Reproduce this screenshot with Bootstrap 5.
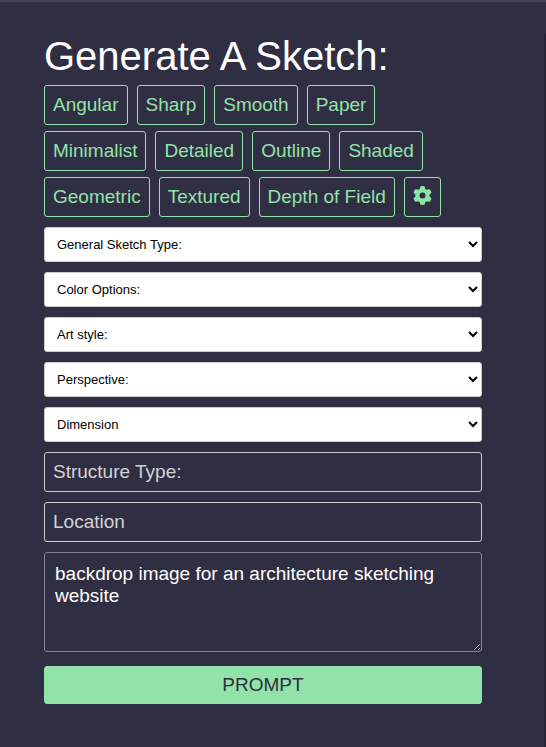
<!DOCTYPE html>
<html lang="en">
<head>
<meta charset="utf-8">
<meta name="viewport" content="width=device-width, initial-scale=1">
<title>Generate A Sketch</title>
<link href="https://cdn.jsdelivr.net/npm/bootstrap@5.3.0/dist/css/bootstrap.min.css" rel="stylesheet">
<style>
  body {
    background: #302e42;
    color: #fff;
    font-family: "Liberation Sans", Arial, sans-serif;
    font-size: 19px;
    border-top: 2px solid #444158;
  }
  .sketch-panel { padding: 30px 62px 43px 44px; }
  .edge-rail { width: 2px; margin-top: 32px; background: #262435; }
  .sketch-title { font-size: 40px; line-height: 48px; margin-bottom: 5px; font-weight: 400; }
  .chip-list { gap: 6px 9px; margin-bottom: 10px; }
  .chip {
    --bs-btn-color: #92e3a9;
    --bs-btn-border-color: #92e3a9;
    --bs-btn-hover-color: #302e42;
    --bs-btn-hover-bg: #92e3a9;
    --bs-btn-hover-border-color: #92e3a9;
    --bs-btn-padding-x: 8px;
    --bs-btn-padding-y: 4px;
    --bs-btn-font-size: 19px;
    --bs-btn-line-height: 30px;
    --bs-btn-border-radius: 3px;
    height: 40px;
  }
  .chip svg { width: 19px; height: 19px; display: block; margin-bottom: 3px; }
  .field-stack { gap: 10px; }
  .pick {
    height: 35px;
    padding: 0 8px;
    border: 1px solid #ccc;
    border-radius: 3px;
    background: #fff;
    color: #000;
    font-size: 13px;
  }
  .entry, .entry:focus {
    height: 40px;
    padding: 5px 8px;
    border: 1px solid #ccc;
    border-radius: 3px;
    background: transparent;
    color: #fff;
    font-size: 19px;
    line-height: 28px;
  }
  .entry::placeholder { color: #d3d3d3; opacity: 1; }
  .prompt-text, .prompt-text:focus {
    height: 100px;
    padding: 10px;
    border: 1px solid #858490;
    border-radius: 3px;
    background: transparent;
    color: #fff;
    font-size: 19px;
    line-height: 22px;
  }
  .prompt-send {
    --bs-btn-color: #302e42;
    --bs-btn-bg: #92e3a9;
    --bs-btn-border-color: #92e3a9;
    --bs-btn-hover-color: #302e42;
    --bs-btn-hover-bg: #7fd497;
    --bs-btn-padding-y: 4px;
    --bs-btn-font-size: 19px;
    --bs-btn-line-height: 28px;
    --bs-btn-border-radius: 3px;
    margin-top: 4px;
  }
</style>
</head>
<body>
<div class="d-flex">
  <main class="sketch-panel flex-grow-1">
    <h1 class="sketch-title">Generate A Sketch:</h1>
    <div class="chip-list d-flex flex-wrap">
      <button type="button" class="btn chip">Angular</button>
      <button type="button" class="btn chip">Sharp</button>
      <button type="button" class="btn chip">Smooth</button>
      <button type="button" class="btn chip">Paper</button>
      <button type="button" class="btn chip">Minimalist</button>
      <button type="button" class="btn chip">Detailed</button>
      <button type="button" class="btn chip">Outline</button>
      <button type="button" class="btn chip">Shaded</button>
      <button type="button" class="btn chip">Geometric</button>
      <button type="button" class="btn chip">Textured</button>
      <button type="button" class="btn chip">Depth of Field</button>
      <button type="button" class="btn chip" aria-label="Settings">
        <svg viewBox="0 0 512 512" fill="currentColor" aria-hidden="true"><path d="M495.9 166.6c3.2 8.7 .5 18.4-6.4 24.6l-43.3 39.4c1.1 8.3 1.7 16.8 1.7 25.4s-.6 17.1-1.7 25.4l43.3 39.4c6.9 6.2 9.6 15.9 6.4 24.6c-4.4 11.9-9.7 23.3-15.8 34.3l-4.7 8.1c-6.6 11-14 21.4-22.1 31.2c-5.9 7.2-15.7 9.6-24.5 6.8l-55.7-17.7c-13.4 10.3-28.2 18.9-44 25.4l-12.5 57.1c-2 9.1-9 16.3-18.2 17.8c-13.8 2.3-28 3.5-42.5 3.5s-28.7-1.2-42.5-3.5c-9.2-1.5-16.2-8.7-18.2-17.8l-12.5-57.1c-15.8-6.5-30.6-15.1-44-25.4L83.1 425.9c-8.8 2.8-18.6 .3-24.5-6.8c-8.1-9.8-15.5-20.2-22.1-31.2l-4.7-8.1c-6.1-11-11.4-22.4-15.8-34.3c-3.2-8.7-.5-18.4 6.4-24.6l43.3-39.4C64.6 273.1 64 264.6 64 256s.6-17.1 1.7-25.4L22.4 191.2c-6.9-6.2-9.6-15.9-6.4-24.6c4.4-11.9 9.7-23.3 15.8-34.3l4.7-8.1c6.6-11 14-21.4 22.1-31.2c5.9-7.2 15.7-9.6 24.5-6.8l55.7 17.7c13.4-10.3 28.2-18.9 44-25.4l12.5-57.1c2-9.1 9-16.3 18.2-17.8C227.3 1.2 241.5 0 256 0s28.7 1.2 42.5 3.5c9.2 1.5 16.2 8.7 18.2 17.8l12.5 57.1c15.8 6.5 30.6 15.1 44 25.4l55.7-17.7c8.8-2.8 18.6-.3 24.5 6.8c8.1 9.8 15.5 20.2 22.1 31.2l4.7 8.1c6.1 11 11.4 22.4 15.8 34.3zM256 336a80 80 0 1 0 0-160 80 80 0 1 0 0 160z"/></svg>
      </button>
    </div>
    <form class="field-stack d-flex flex-column">
      <select class="pick w-100" aria-label="General Sketch Type"><option>General Sketch Type:</option></select>
      <select class="pick w-100" aria-label="Color Options"><option>Color Options:</option></select>
      <select class="pick w-100" aria-label="Art style"><option>Art style:</option></select>
      <select class="pick w-100" aria-label="Perspective"><option>Perspective:</option></select>
      <select class="pick w-100" aria-label="Dimension"><option>Dimension</option></select>
      <input type="text" class="form-control entry" placeholder="Structure Type:" aria-label="Structure Type">
      <input type="text" class="form-control entry" placeholder="Location" aria-label="Location">
      <textarea class="form-control prompt-text" aria-label="Prompt text">backdrop image for an architecture sketching website</textarea>
      <button type="button" class="btn prompt-send w-100">PROMPT</button>
    </form>
  </main>
  <div class="edge-rail flex-shrink-0"></div>
</div>
<script src="https://cdn.jsdelivr.net/npm/bootstrap@5.3.0/dist/js/bootstrap.bundle.min.js"></script>
</body>
</html>
